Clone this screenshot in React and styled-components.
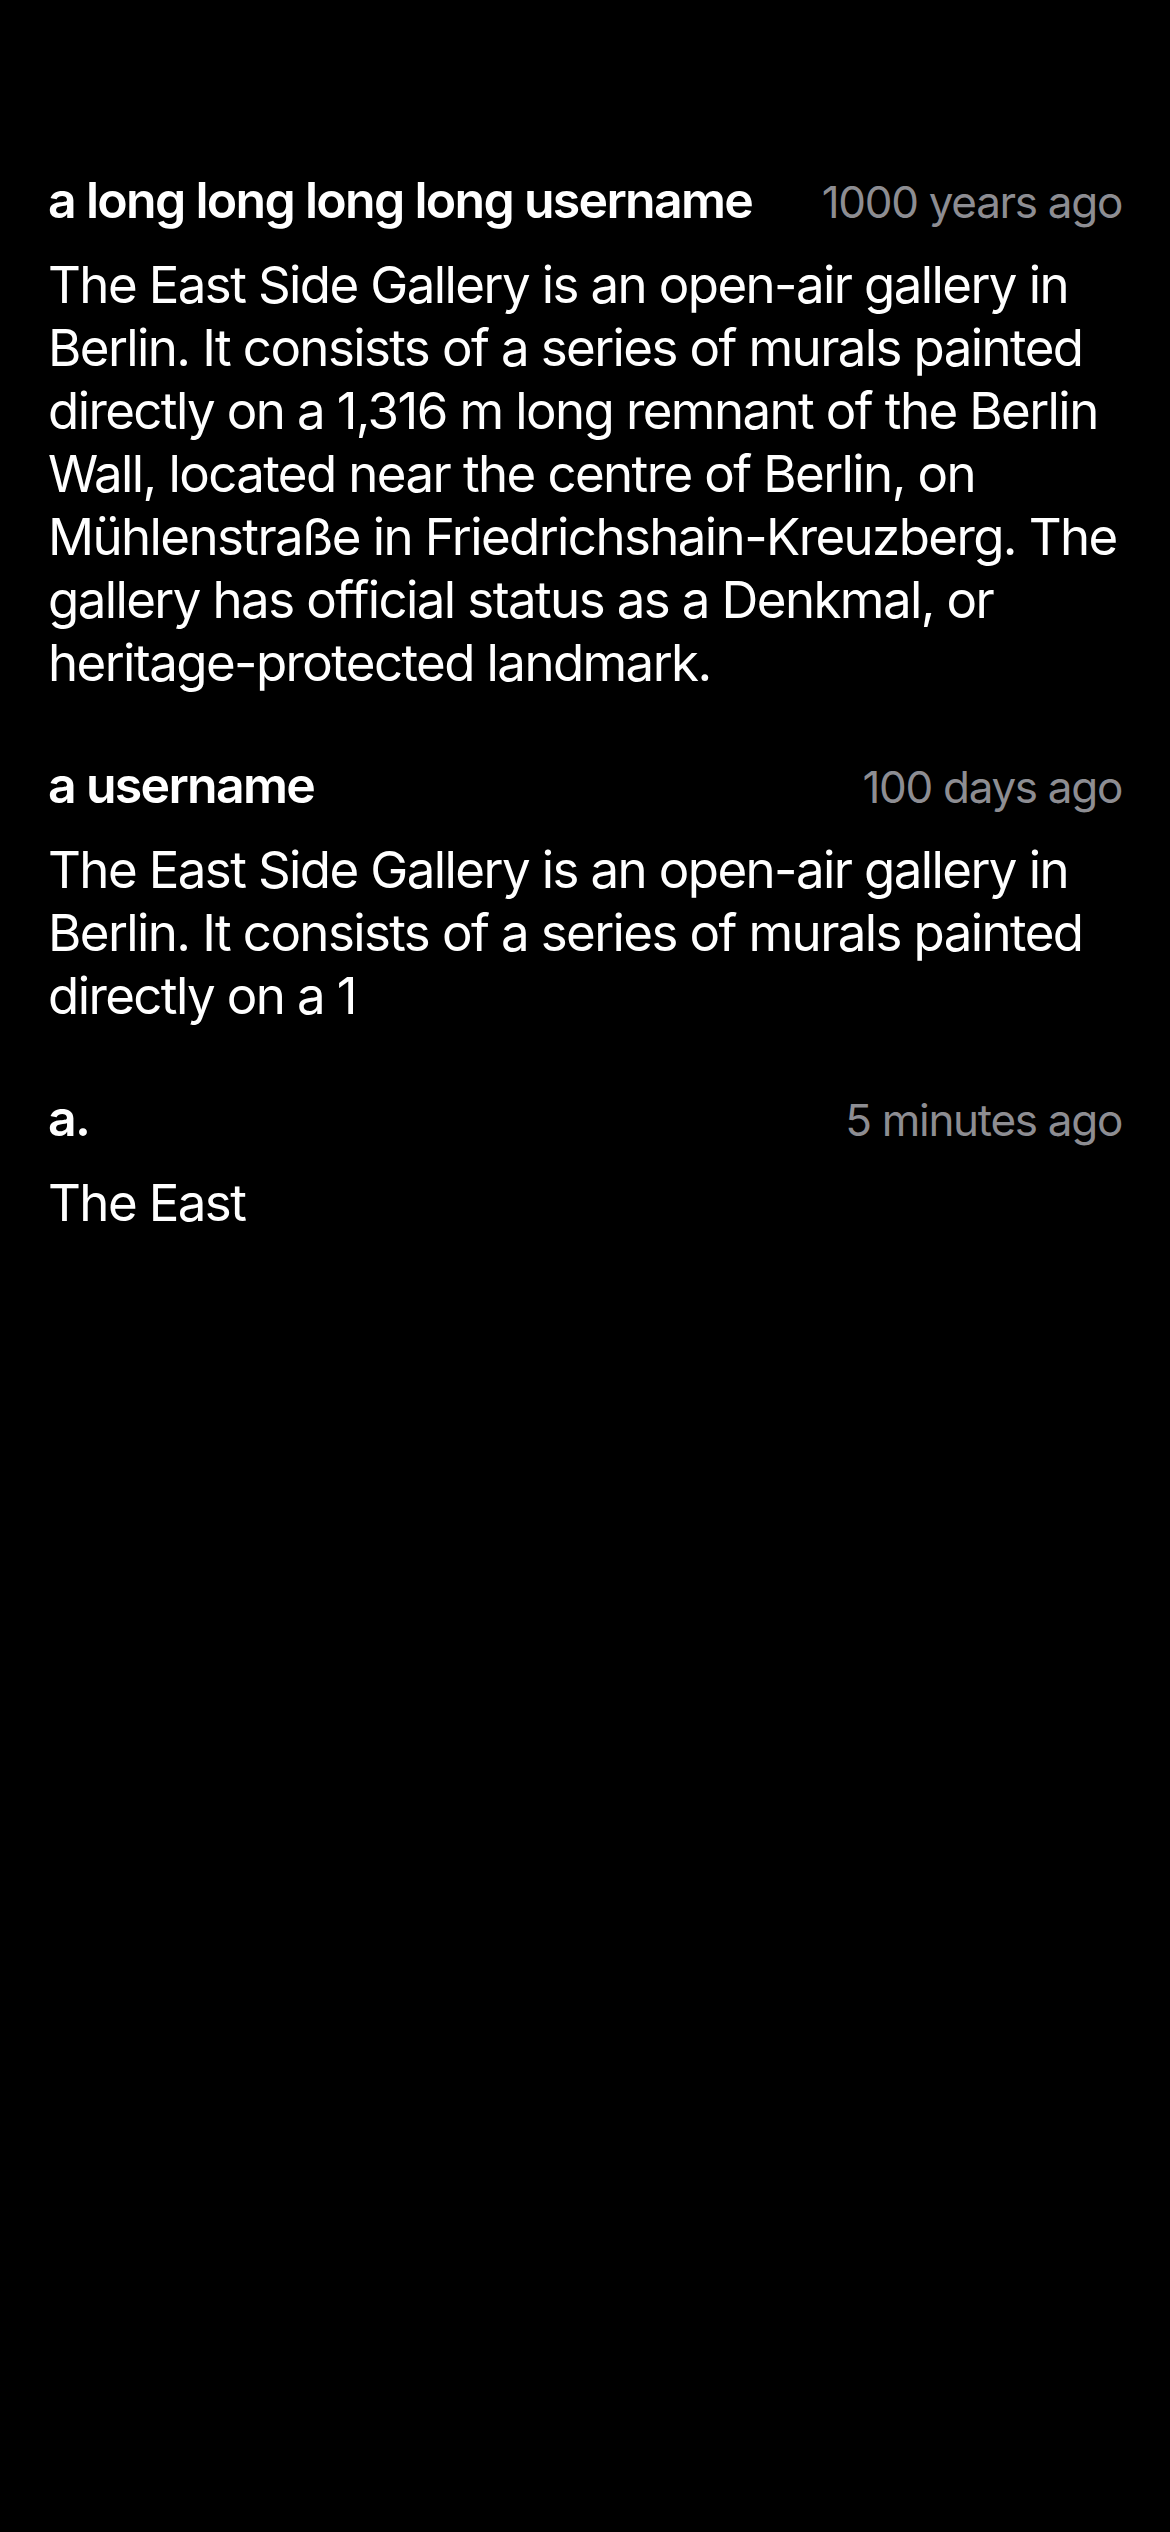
import React from 'react';
import styled, { createGlobalStyle } from 'styled-components';

const GlobalStyle = createGlobalStyle`
  html, body {
    margin: 0;
    padding: 0;
    background: #000;
  }
  body {
    font-family: Inter, "Noto Sans", "Liberation Sans", sans-serif;
    -webkit-font-smoothing: antialiased;
  }
`;

const Screen = styled.div`
  min-height: 2532px;
  background: #000;
  color: #fff;
  padding: 169px 48px 0;
  box-sizing: border-box;
  display: flex;
  flex-direction: column;
  gap: 60px;
`;

const Comment = styled.article`
  display: flex;
  flex-direction: column;
  gap: 19px;
`;

const Header = styled.div`
  display: flex;
  align-items: baseline;
  justify-content: space-between;
  gap: 40px;
`;

const Username = styled.span`
  font-size: 50px;
  line-height: 63px;
  font-weight: 600;
  letter-spacing: -1.7px;
  white-space: nowrap;
`;

const Time = styled.span`
  font-size: 44px;
  line-height: 63px;
  color: #8d8d92;
  letter-spacing: -1.3px;
  white-space: nowrap;
`;

const Body = styled.p`
  margin: 0;
  font-size: 51px;
  line-height: 63px;
  letter-spacing: -1.6px;
`;

const comments = [
  {
    id: 1,
    user: 'a long long long long username',
    time: '1000 years ago',
    text: 'The East Side Gallery is an open-air gallery in Berlin. It consists of a series of murals painted directly on a 1,316 m long remnant of the Berlin Wall, located near the centre of Berlin, on Mühlenstraße in Friedrichshain-Kreuzberg. The gallery has official status as a Denkmal, or heritage-protected landmark.',
  },
  {
    id: 2,
    user: 'a username',
    time: '100 days ago',
    text: 'The East Side Gallery is an open-air gallery in Berlin. It consists of a series of murals painted directly on a 1',
  },
  {
    id: 3,
    user: 'a.',
    time: '5 minutes ago',
    text: 'The East',
  },
];

export default function App() {
  return (
    <>
      <GlobalStyle />
      <Screen>
        {comments.map((c) => (
          <Comment key={c.id}>
            <Header>
              <Username>{c.user}</Username>
              <Time>{c.time}</Time>
            </Header>
            <Body>{c.text}</Body>
          </Comment>
        ))}
      </Screen>
    </>
  );
}
